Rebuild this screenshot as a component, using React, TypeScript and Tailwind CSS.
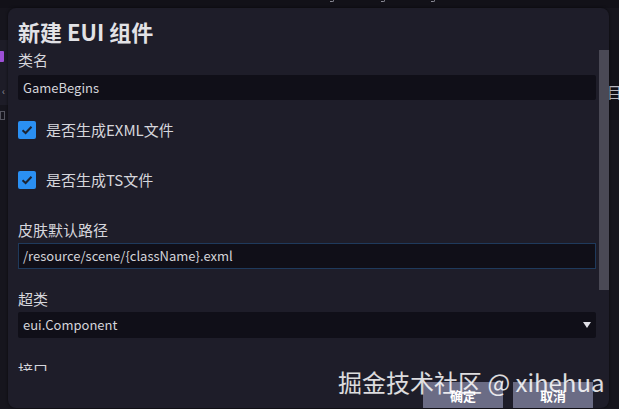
import React from "react";

const font = { fontFamily: '"Noto Sans CJK SC", "Noto Sans", sans-serif' };

function Check() {
  return (
    <span className="flex h-[18px] w-[18px] shrink-0 items-center justify-center rounded-[2px] bg-[#2a8ff2]">
      <svg width="12" height="10" viewBox="0 0 12 10">
        <path d="M1.5 5.2 L4.6 8 L10.5 1.8" fill="none" stroke="#1c2433" strokeWidth="2" />
      </svg>
    </span>
  );
}

export default function App() {
  return (
    <div
      className="relative h-[409px] w-[619px] overflow-hidden bg-[#16151d] text-[#d6d6dc]"
      style={font}
    >
      {/* background decorations */}
      <div className="absolute left-0 top-0 h-[8px] w-[619px] bg-[#121118]" />
      <span className="absolute left-[330px] top-[-1px] h-[3px] w-[4px] rounded-br-[2px] border-b border-r border-[#8a8a94]" />
      <span className="absolute left-[381px] top-[-1px] h-[3px] w-[4px] rounded-br-[2px] border-b border-r border-[#8a8a94]" />
      <span className="absolute left-[431px] top-[-1px] h-[3px] w-[4px] rounded-br-[2px] border-b border-r border-[#8a8a94]" />
      <div className="absolute left-0 top-[40px] h-[65px] w-[8px] bg-[#1d1c27]" />
      <div className="absolute left-0 top-[51px] h-[11px] w-[4px] rounded-r-[1px] bg-[#9d4fd6]" />
      <span className="absolute left-[2px] top-[84px] text-[10px] leading-[14px] text-[#8d8d96]">‹</span>
      <div className="absolute left-0 top-[111px] h-[9px] w-[5px] border border-[#55555f]" />
      <div className="absolute right-0 top-[40px] h-[80px] w-[11px] overflow-hidden border-l border-[#0d0c12] bg-[#121118]">
        <span className="absolute left-[-2px] top-[42px] text-[15px] leading-[20px] text-[#b8b8c0]">目</span>
      </div>

      {/* dialog */}
      <div className="absolute left-[8px] top-[8px] flex h-[400px] w-[601px] flex-col overflow-hidden rounded-[8px] bg-[#1e1d29] shadow-[0_0_3px_rgba(0,0,0,0.6)]">
        <div className="h-[42px] shrink-0 pl-[10px] pt-[5px] text-[22px] font-bold leading-[36px] text-[#e2e2e6]">
          新建 EUI 组件
        </div>

        <div className="flex h-[321px] shrink-0">
          <div className="flex flex-1 flex-col overflow-hidden pl-[10px] pr-[3px]">
            <div className="h-[20px] shrink-0 text-[15px] leading-[20px]">类名</div>
            <div className="mt-[5px] flex h-[25px] shrink-0 items-center rounded-[2px] bg-[#100f18] pl-[5px] text-[13px] text-[#d4d4da]">
              GameBegins
            </div>

            <div className="mt-[20px] flex h-[19px] shrink-0 items-center gap-[10px]">
              <Check />
              <span className="text-[15px] leading-[20px]">是否生成EXML文件</span>
            </div>
            <div className="mt-[31px] flex h-[19px] shrink-0 items-center gap-[10px]">
              <Check />
              <span className="text-[15px] leading-[20px]">是否生成TS文件</span>
            </div>

            <div className="mt-[31px] h-[20px] shrink-0 text-[15px] leading-[20px]">皮肤默认路径</div>
            <div className="mt-[3px] flex h-[26px] shrink-0 items-center border border-[#1f3a5c] bg-[#100f18] pl-[4px] text-[13px] text-[#d4d4da]">
              /resource/scene/{"{className}"}.exml
            </div>

            <div className="mt-[20px] h-[20px] shrink-0 text-[15px] leading-[20px]">超类</div>
            <div className="mt-[3px] flex h-[26px] shrink-0 items-center justify-between rounded-[2px] bg-[#100f18] pl-[5px] pr-[5px] text-[13px] text-[#d4d4da]">
              <span>eui.Component</span>
              <svg width="8" height="6" viewBox="0 0 8 6">
                <path d="M0 0 H8 L4 6 Z" fill="#e0e0e6" />
              </svg>
            </div>

            <div className="mt-[22px] h-[20px] shrink-0 text-[15px] leading-[20px]">接口</div>
          </div>
          <div className="relative w-[10px] shrink-0">
            <div className="absolute left-0 top-0 h-[240px] w-[10px] bg-[#4a4955]" />
          </div>
        </div>

        <div className="flex shrink-0 justify-end gap-[10px] pr-[16px] pt-[11px]">
          <button className="h-[28px] w-[80px] shrink-0 bg-[#6b6c85] text-[13px] font-bold text-white">确定</button>
          <button className="h-[28px] w-[80px] shrink-0 bg-[#6b6c85] text-[13px] font-bold text-white">取消</button>
        </div>
      </div>

      {/* watermark */}
      <div className="absolute left-[338px] top-[366px] whitespace-nowrap text-[24px] leading-[32px] text-white/85">
        掘金技术社区 @ xihehua
      </div>
    </div>
  );
}
